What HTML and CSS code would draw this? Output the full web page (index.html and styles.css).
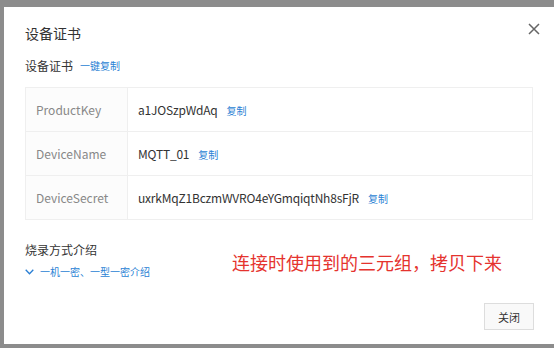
FILE: index.html
```html
<!DOCTYPE html>
<html lang="zh">
<head>
<meta charset="utf-8">
<link rel="stylesheet" href="styles.css">
</head>
<body>
<div class="dialog">
  <div class="header">
    <div class="title">设备证书</div>
    <button class="close" aria-label="close">
      <svg width="12" height="12" viewBox="0 0 12 12"><path d="M1 1L11 11M11 1L1 11" stroke="#666" stroke-width="1.5" fill="none"/></svg>
    </button>
  </div>
  <div class="subtitle"><span>设备证书</span><a class="link">一键复制</a></div>
  <div class="table">
    <div class="row"><div class="label">ProductKey</div><div class="value">a1JOSzpWdAq<a class="copy">复制</a></div></div>
    <div class="row"><div class="label">DeviceName</div><div class="value">MQTT_01<a class="copy">复制</a></div></div>
    <div class="row"><div class="label">DeviceSecret</div><div class="value">uxrkMqZ1BczmWVRO4eYGmqiqtNh8sFjR<a class="copy">复制</a></div></div>
  </div>
  <div class="intro">
    <div class="intro-left">
      <div class="intro-title">烧录方式介绍</div>
      <a class="intro-link"><svg width="9" height="6" viewBox="0 0 9 6"><path d="M0.7 0.7L4.5 4.8L8.3 0.7" stroke="#2a7fd4" stroke-width="1.3" fill="none"/></svg>一机一密、一型一密介绍</a>
    </div>
    <div class="note">连接时使用到的三元组，拷贝下来</div>
  </div>
  <div class="footer"><button class="btn">关闭</button></div>
</div>
</body>
</html>
```
FILE: styles.css
```css
html, body { margin: 0; padding: 0; }
body {
  width: 554px;
  height: 348px;
  background: #8c8c8c;
  font-family: "Noto Sans CJK SC", "Noto Sans", sans-serif;
  overflow: hidden;
}
.dialog {
  position: relative;
  margin: 7px 0 0 4px;
  width: 550px;
  height: 337px;
  background: #fff;
  box-sizing: border-box;
  padding: 16px 21px 14px 21px;
  display: flex;
  flex-direction: column;
}
.header { display: flex; justify-content: space-between; }
.title { font-size: 14px; line-height: 20px; color: #333; }
.close {
  position: absolute;
  top: 16px;
  right: 14px;
  border: 0;
  background: none;
  padding: 0;
  width: 12px;
  height: 12px;
  display: flex;
}
.subtitle {
  margin-top: 13px;
  font-size: 12px;
  line-height: 20px;
  color: #333;
  display: flex;
  align-items: center;
  gap: 7px;
}
.link { font-size: 10px; color: #2a7fd4; }
.table {
  margin-top: 11px;
  border: 1px solid #efefef;
}
.row {
  display: flex;
  height: 43px;
  border-bottom: 1px solid #efefef;
}
.row:last-child { border-bottom: 0; }
.label {
  width: 102px;
  box-sizing: border-box;
  padding-left: 10px;
  background: #fcfcfc;
  border-right: 1px solid #efefef;
  color: #888;
  font-size: 12px;
  display: flex;
  align-items: center;
}
.value {
  padding-left: 10px;
  color: #333;
  font-size: 12px;
  letter-spacing: -0.2px;
  display: flex;
  align-items: center;
}
.copy { font-size: 10px; color: #2a7fd4; margin-left: 9px; margin-top: 2px; letter-spacing: 0; }
.intro { margin-top: 20px; display: flex; align-items: flex-start; }
.intro-left { width: 207px; }
.intro-title { font-size: 12px; line-height: 20px; color: #333; }
.intro-link {
  font-size: 10px;
  line-height: 20px;
  margin-top: 2px;
  color: #2a7fd4;
  display: flex;
  align-items: center;
  gap: 6px;
}
.note {
  margin-top: 10px;
  font-size: 18px;
  line-height: 24px;
  color: #e5332e;
}
.footer { margin-top: auto; display: flex; justify-content: flex-end; }
.btn {
  width: 50px;
  height: 27px;
  border: 1px solid #dddddd;
  background: #f9f9f9;
  font-family: inherit;
  font-size: 11px;
  color: #333;
  padding: 0;
  margin-right: -1px;
}
```
